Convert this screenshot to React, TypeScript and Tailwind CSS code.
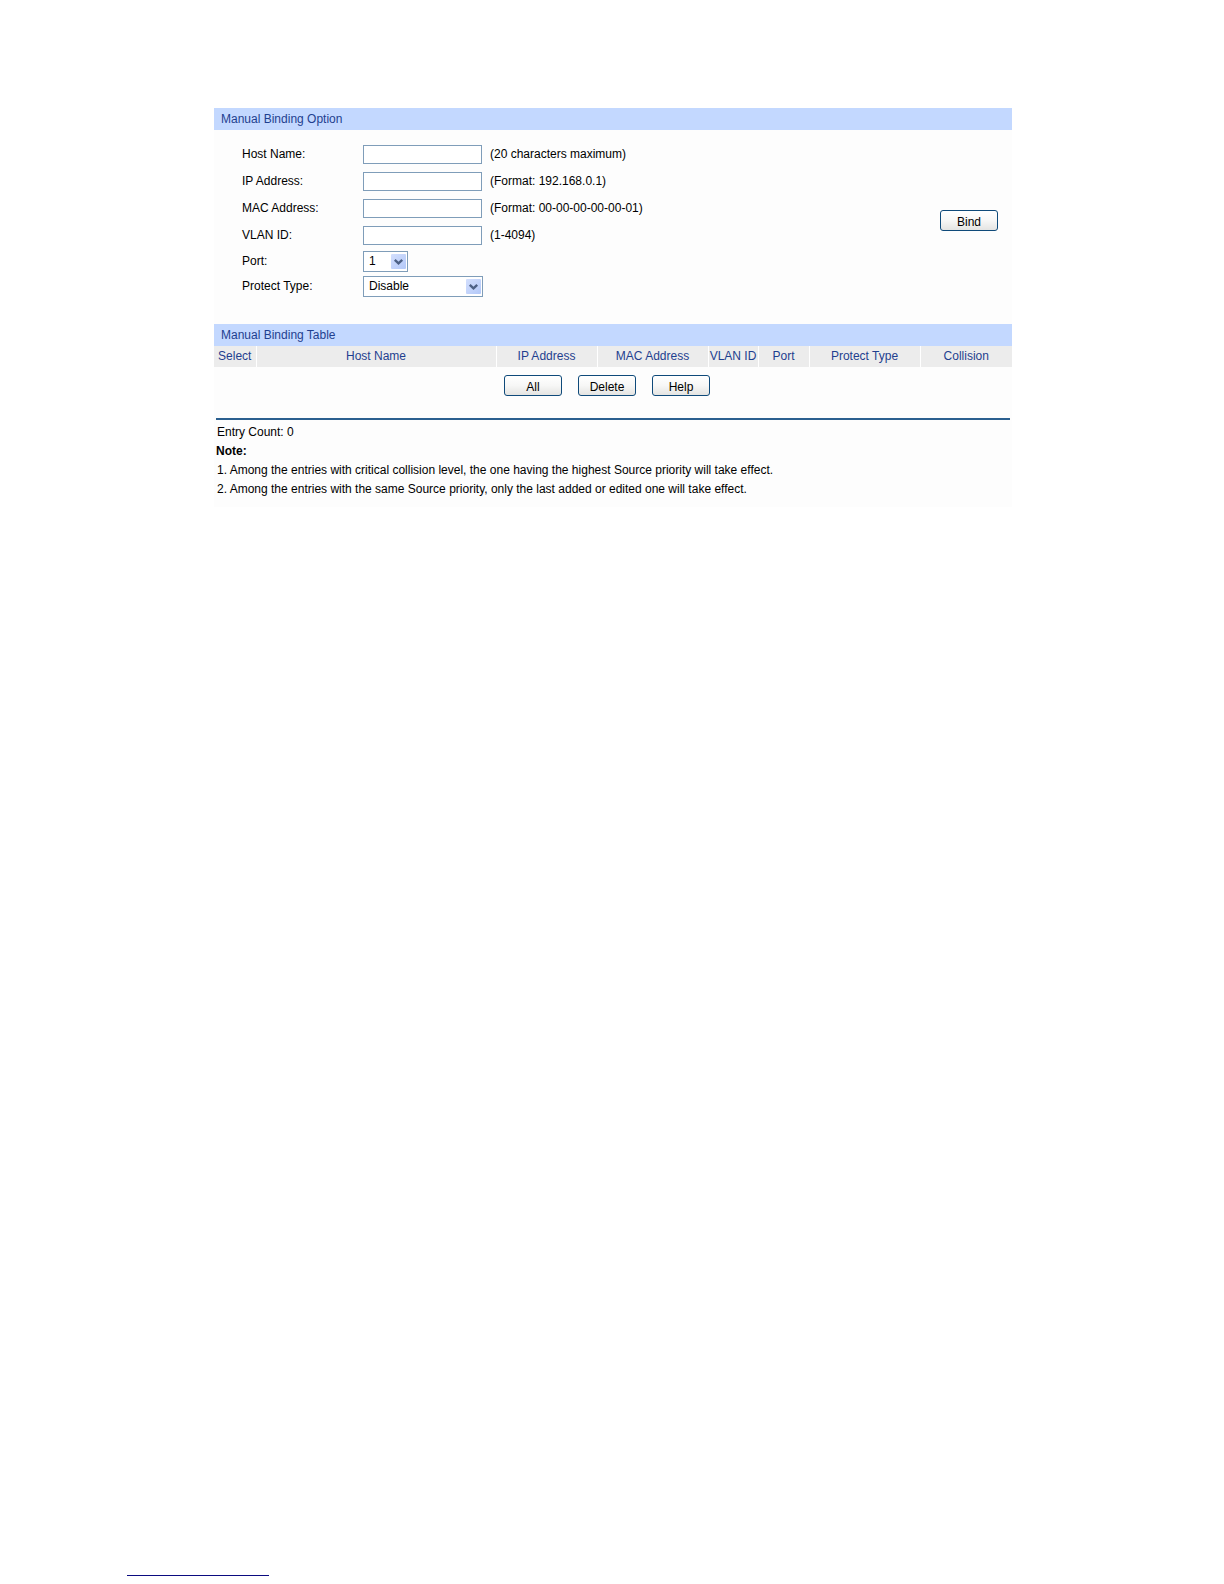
import { useState } from "react";
import type { ReactNode } from "react";
import clsx from "clsx";

type TextField = {
  id: string;
  label: string;
  hint: string;
};

const TEXT_FIELDS: TextField[] = [
  { id: "host-name", label: "Host Name:", hint: "(20 characters maximum)" },
  { id: "ip-address", label: "IP Address:", hint: "(Format: 192.168.0.1)" },
  { id: "mac-address", label: "MAC Address:", hint: "(Format: 00-00-00-00-00-01)" },
  { id: "vlan-id", label: "VLAN ID:", hint: "(1-4094)" },
];

const COLUMNS = [
  { title: "Select", width: "w-[42px]" },
  { title: "Host Name", width: "w-[240px]" },
  { title: "IP Address", width: "w-[101px]" },
  { title: "MAC Address", width: "w-[111px]" },
  { title: "VLAN ID", width: "w-[50px]" },
  { title: "Port", width: "w-[51px]" },
  { title: "Protect Type", width: "w-[111px]" },
  { title: "Collision", width: "w-[92px]" },
];

function SectionTitle({ children }: { children: ReactNode }) {
  return (
    <h2 className="h-[22px] bg-[#c3d8ff] px-[7px] leading-[22px] text-[#1f3f8f]">{children}</h2>
  );
}

function PushButton({ children }: { children: ReactNode }) {
  return (
    <button
      type="button"
      className="h-[21px] w-[58px] rounded-[3px] border border-[#0f4a7a] bg-linear-to-b from-white via-[#f7f7f6] to-[#e4e4e2] pt-1 leading-[15px] text-black"
    >
      {children}
    </button>
  );
}

type SelectProps = {
  id: string;
  options: string[];
  className: string;
};

function Select({ id, options, className }: SelectProps) {
  const [value, setValue] = useState(options[0]);

  return (
    <div className={clsx("relative", className)}>
      <select
        id={id}
        value={value}
        onChange={(event) => setValue(event.target.value)}
        className="block h-[21px] w-full appearance-none border border-[#7f9db9] bg-white pr-5 pl-[5px] leading-[19px] text-black"
      >
        {options.map((option) => (
          <option key={option}>{option}</option>
        ))}
      </select>
      <svg
        viewBox="0 0 15 15"
        className="pointer-events-none absolute top-[3px] right-[2px] size-[15px]"
        aria-hidden="true"
      >
        <defs>
          <linearGradient id={`${id}-arrow`} x1="0" y1="0" x2="1" y2="1">
            <stop offset="0" stopColor="#d3dffd" />
            <stop offset="1" stopColor="#b3c8f8" />
          </linearGradient>
        </defs>
        <rect width="15" height="15" rx="1" fill={`url(#${id}-arrow)`} />
        <path d="M3.8 5.8 7.5 9.3l3.7-3.5" fill="none" stroke="#4d6185" strokeWidth="2.4" />
      </svg>
    </div>
  );
}

function BindingForm() {
  return (
    <form className="flex items-center justify-between pt-[11px] pr-[14px] pb-[25px] pl-7">
      <div>
        {TEXT_FIELDS.map((field) => (
          <div key={field.id} className="flex h-[27px] items-center">
            <label htmlFor={field.id} className="w-[121px]">
              {field.label}
            </label>
            <input
              id={field.id}
              type="text"
              className="h-[19px] w-[119px] border border-[#7f9db9] bg-white px-1"
            />
            <span className="ml-2">{field.hint}</span>
          </div>
        ))}
        <div className="flex h-[25px] items-center">
          <label htmlFor="port" className="w-[121px]">
            Port:
          </label>
          <Select id="port" options={["1"]} className="w-[45px]" />
        </div>
        <div className="flex h-[25px] items-center">
          <label htmlFor="protect-type" className="w-[121px]">
            Protect Type:
          </label>
          <Select id="protect-type" options={["Disable"]} className="w-[120px]" />
        </div>
      </div>
      <PushButton>Bind</PushButton>
    </form>
  );
}

function BindingTable() {
  return (
    <table className="w-full table-fixed border-collapse">
      <thead>
        <tr>
          {COLUMNS.map((column) => (
            <th
              key={column.title}
              scope="col"
              className={clsx(
                "h-[21px] border-l border-white bg-[#ececec] p-0 text-center font-normal whitespace-nowrap text-[#1f3f8f] first:border-l-0",
                column.width
              )}
            >
              {column.title}
            </th>
          ))}
        </tr>
      </thead>
    </table>
  );
}

export default function App() {
  return (
    <div className="flex min-h-screen flex-col bg-white font-['Liberation_Sans',Arial,sans-serif] text-[12px] leading-[19px] text-black">
      <main className="mx-auto w-full max-w-[800px] pt-[108px] pl-0.5">
        <div className="bg-[#fdfdfd]">
          <section>
            <SectionTitle>Manual Binding Option</SectionTitle>
            <BindingForm />
          </section>

          <section>
            <SectionTitle>Manual Binding Table</SectionTitle>
            <BindingTable />
            <div className="flex justify-center gap-4 pt-2 pr-3 pb-[22px]">
              <PushButton>All</PushButton>
              <PushButton>Delete</PushButton>
              <PushButton>Help</PushButton>
            </div>
          </section>

          <div className="mx-0.5 border-t-2 border-[#2a5f8f] pt-[3px] pb-2">
            <p className="pl-px">Entry Count: 0</p>
            <p className="font-bold">Note:</p>
            <ol className="pl-px">
              <li>
                1. Among the entries with critical collision level, the one having the highest Source
                priority will take effect.
              </li>
              <li>
                2. Among the entries with the same Source priority, only the last added or edited one
                will take effect.
              </li>
            </ol>
          </div>
        </div>
      </main>

      <footer className="mt-auto pb-2 pl-[127px]">
        <hr className="w-[142px] border-t border-[#0b0b80]" />
      </footer>
    </div>
  );
}
